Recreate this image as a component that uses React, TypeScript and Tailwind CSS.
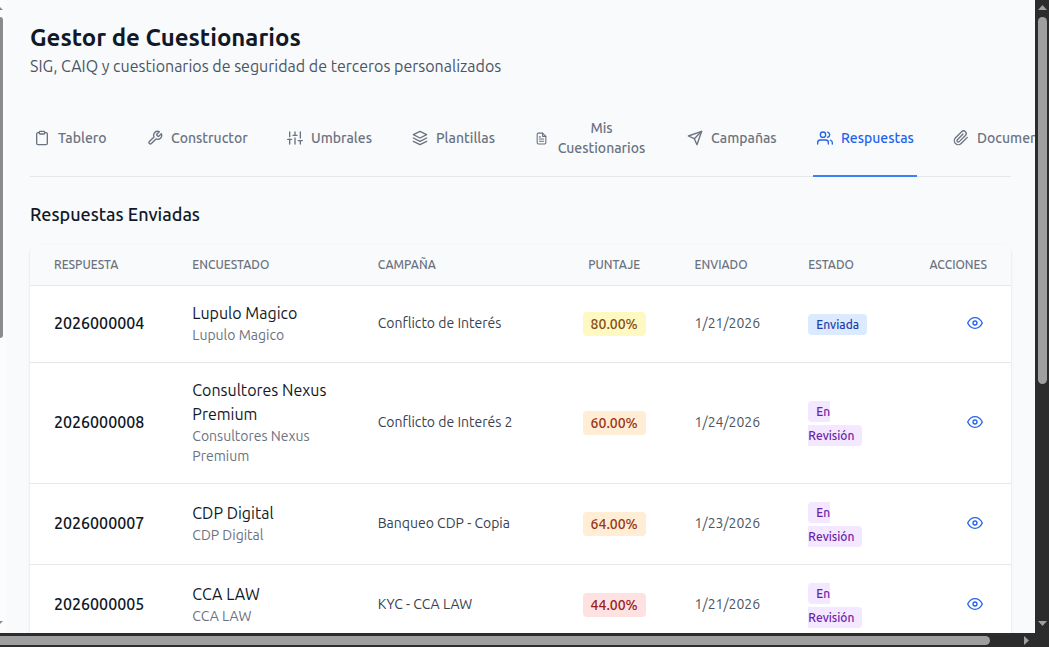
import {
  FiClipboard,
  FiEye,
  FiFileText,
  FiLayers,
  FiPaperclip,
  FiSend,
  FiSliders,
  FiTool,
  FiUsers,
} from 'react-icons/fi'

const tabs = [
  { label: 'Tablero', Icon: FiClipboard, width: 'w-[81px]' },
  { label: 'Constructor', Icon: FiTool, width: 'w-[108px]' },
  { label: 'Umbrales', Icon: FiSliders, width: 'w-[93px]' },
  { label: 'Plantillas', Icon: FiLayers, width: 'w-[91px]' },
  { label: 'Mis Cuestionarios', Icon: FiFileText, width: 'w-[120px]' },
  { label: 'Campañas', Icon: FiSend, width: 'w-[98px]' },
  { label: 'Respuestas', Icon: FiUsers, width: 'w-[104px]' },
  { label: 'Documentos', Icon: FiPaperclip, width: 'w-[112px]' },
]

const rows = [
  { id: '2026000004', name: 'Lupulo Magico', campaign: 'Conflicto de Interés', score: '80.00%', scoreStyle: 'bg-[#fef9c3] text-[#854d0e]', date: '1/21/2026', status: 'Enviada' },
  { id: '2026000008', name: 'Consultores Nexus Premium', campaign: 'Conflicto de Interés 2', score: '60.00%', scoreStyle: 'bg-[#ffedd5] text-[#9a3412]', date: '1/24/2026', status: 'En Revisión' },
  { id: '2026000007', name: 'CDP Digital', campaign: 'Banqueo CDP - Copia', score: '64.00%', scoreStyle: 'bg-[#ffedd5] text-[#9a3412]', date: '1/23/2026', status: 'En Revisión' },
  { id: '2026000005', name: 'CCA LAW', campaign: 'KYC - CCA LAW', score: '44.00%', scoreStyle: 'bg-[#fee2e2] text-[#991b1b]', date: '1/21/2026', status: 'En Revisión' },
]

const Tabs = () => {
  return (
    <nav className="mt-6 flex gap-8 border-b border-[#e5e7eb]">
      {tabs.map(({ label, Icon, width }) => {
        const active = label === 'Respuestas'
        const small = label === 'Mis Cuestionarios'
        return (
          <button
            key={label}
            type="button"
            className={`-mb-px flex shrink-0 items-center border-b-2 px-1 pt-4 pb-[17px] text-sm font-medium ${width} ${
              active ? 'border-[#3b82f6] text-[#2563eb]' : 'border-transparent text-[#6b7280]'
            }`}
          >
            <Icon className={small ? 'mr-2 size-[13px] shrink-0' : 'mr-2 size-4 shrink-0'} />
            <span className="text-center">{label}</span>
          </button>
        )
      })}
    </nav>
  )
}

const ResponsesTable = () => {
  return (
    <div className="mt-[17px] overflow-hidden rounded-lg bg-white shadow-sm">
      <table className="w-full table-fixed text-left">
        <colgroup>
          <col className="w-[14.1%]" />
          <col className="w-[18.9%]" />
          <col className="w-[20.8%]" />
          <col className="w-[11.5%]" />
          <col className="w-[11.6%]" />
          <col className="w-[12.3%]" />
          <col className="w-[10.8%]" />
        </colgroup>
        <thead className="border-b border-[#e5e7eb] bg-[#f9fafb] text-xs text-[#6b7280] uppercase">
          <tr>
            <th className="px-6 py-3 font-medium">Respuesta</th>
            <th className="px-6 py-3 font-medium">Encuestado</th>
            <th className="px-6 py-3 font-medium">Campaña</th>
            <th className="px-6 py-3 text-center font-medium">Puntaje</th>
            <th className="px-6 py-3 font-medium">Enviado</th>
            <th className="px-6 py-3 font-medium">Estado</th>
            <th className="px-6 py-3 text-right font-medium">Acciones</th>
          </tr>
        </thead>
        <tbody className="divide-y divide-[#e5e7eb]">
          {rows.map((row) => (
            <tr key={row.id}>
              <td className="px-6 pt-[15px] pb-[17px] font-medium text-[#111827]">{row.id}</td>
              <td className="px-6 pt-[15px] pb-[17px]">
                <div className="text-[#111827]">{row.name}</div>
                <div className="text-sm text-[#6b7280]">{row.name}</div>
              </td>
              <td className="px-6 pt-[15px] pb-[17px] text-sm text-[#374151]">{row.campaign}</td>
              <td className="px-4 pt-[15px] pb-[17px] text-center">
                <span className={`rounded px-2 py-1 text-sm font-medium ${row.scoreStyle}`}>
                  {row.score}
                </span>
              </td>
              <td className="px-6 pt-[15px] pb-[17px] text-sm text-[#4b5563]">{row.date}</td>
              <td className="px-6 pt-[15px] pb-[17px]">
                <span
                  className={`rounded px-2 py-1 text-xs font-medium ${
                    row.status === 'Enviada' ? 'bg-[#dbeafe] text-[#1e40af]' : 'bg-[#f3e8ff] text-[#6b21a8]'
                  }`}
                >
                  {row.status}
                </span>
              </td>
              <td className="px-6 pt-[15px] pb-[17px]">
                <button type="button" aria-label="Ver respuesta" className="ml-auto block p-1 text-[#2563eb]">
                  <FiEye className="size-4" />
                </button>
              </td>
            </tr>
          ))}
        </tbody>
      </table>
    </div>
  )
}

// Edge of the sidebar that stays visible beside the content
const SidebarEdge = () => {
  return (
    <div className="flex w-[6px] shrink-0 flex-col bg-[#fcfcfc]">
      <svg className="mt-[7px] h-[3px] w-[3px]" viewBox="0 0 3 3" fill="#8b8b8b">
        <path d="M0 0L3 3H0Z" />
      </svg>
      <div className="mt-[7px] h-[321px] w-[3px] rounded-tr rounded-br bg-[#8b8b8b]" />
      <svg className="mt-auto mb-[9px] h-[3px] w-[3px]" viewBox="0 0 3 3" fill="#8b8b8b">
        <path d="M0 0H3L0 3Z" />
      </svg>
    </div>
  )
}

const VerticalScroll = () => {
  return (
    <div className="flex w-[14px] shrink-0 flex-col items-center bg-[#2c2c2c] pt-[5px] pb-[7px] pl-px">
      <svg className="h-[5px] w-[9px]" viewBox="0 0 9 5" fill="#9f9f9f">
        <path d="M4.500 0L9 5H0Z" />
      </svg>
      <div className="mt-[7px] h-[367px] w-[9px] rounded-full bg-[#9f9f9f]" />
      <svg className="mt-auto h-[5px] w-[9px]" viewBox="0 0 9 5" fill="#9f9f9f">
        <path d="M0 0H9L4.500 5Z" />
      </svg>
    </div>
  )
}

const HorizontalScroll = () => {
  return (
    <div className="flex h-[14px] shrink-0 items-center bg-[#2c2c2c] pt-px">
      <div className="mr-[34px] h-[9px] flex-1 rounded-r-full bg-[#9f9f9f]" />
      <svg className="mr-5 h-[9px] w-[5px]" viewBox="0 0 5 9" fill="#9f9f9f">
        <path d="M0 0L5 4.500L0 9Z" />
      </svg>
    </div>
  )
}

const App = () => {
  return (
    <div className="flex h-screen flex-col overflow-hidden bg-[#f9fafc] font-['Ubuntu','Noto_Sans',sans-serif]">
      <div className="flex min-h-0 flex-1">
        <SidebarEdge />
        <main className="min-w-0 flex-1 overflow-hidden px-6 pt-[22px]">
          <h1 className="text-2xl font-semibold text-[#111827]">Gestor de Cuestionarios</h1>
          <p className="text-[#4b5563]">
            SIG, CAIQ y cuestionarios de seguridad de terceros personalizados
          </p>
          <Tabs />
          <h2 className="mt-[23px] text-lg font-medium text-[#111827]">Respuestas Enviadas</h2>
          <ResponsesTable />
        </main>
        <VerticalScroll />
      </div>
      <HorizontalScroll />
    </div>
  )
}
export default App
